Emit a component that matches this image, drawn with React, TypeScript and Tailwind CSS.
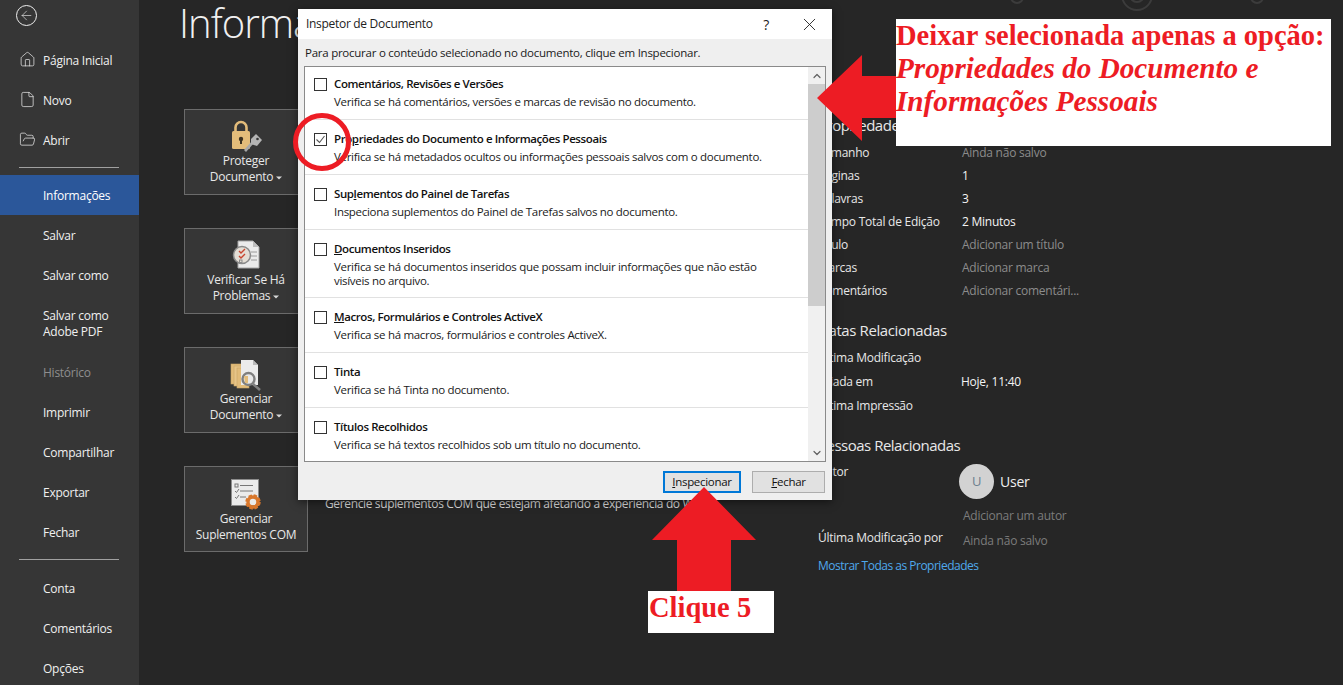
import { ArrowLeft, ChevronDown, ChevronUp, File, FolderOpen, Home, X } from "lucide-react"

const topItems = [
  { label: "Página Inicial", icon: <Home size={17} strokeWidth={1} /> },
  { label: "Novo", icon: <File size={17} strokeWidth={1} /> },
  { label: "Abrir", icon: <FolderOpen size={17} strokeWidth={1} /> },
]

const middleItems = ["Salvar", "Salvar como"]
const lowerItems = ["Imprimir", "Compartilhar", "Exportar", "Fechar"]
const bottomItems = ["Conta", "Comentários", "Opções"]

const properties = [
  { label: "Tamanho", value: "Ainda não salvo", muted: true },
  { label: "Páginas", value: "1", muted: false },
  { label: "Palavras", value: "3", muted: false },
  { label: "Tempo Total de Edição", value: "2 Minutos", muted: false },
  { label: "Título", value: "Adicionar um título", muted: true },
  { label: "Marcas", value: "Adicionar marca", muted: true },
  { label: "Comentários", value: "Adicionar comentári...", muted: true },
]

const dates = [
  { label: "Última Modificação", value: "" },
  { label: "Criada em", value: "Hoje, 11:40" },
  { label: "Última Impressão", value: "" },
]

const inspectors = [
  {
    title: <>Comentários, Revisões e Versões</>,
    text: "Verifica se há comentários, versões e marcas de revisão no documento.",
    height: "h-[55px]",
  },
  {
    title: <>Pro<u>p</u>riedades do Documento e Informações Pessoais</>,
    text: "Verifica se há metadados ocultos ou informações pessoais salvos com o documento.",
    height: "h-[55px]",
    checked: true,
  },
  {
    title: <>Sup<u>l</u>ementos do Painel de Tarefas</>,
    text: "Inspeciona suplementos do Painel de Tarefas salvos no documento.",
    height: "h-[55px]",
  },
  {
    title: <><u>D</u>ocumentos Inseridos</>,
    text: "Verifica se há documentos inseridos que possam incluir informações que não estão\nvisíveis no arquivo.",
    height: "h-[68px]",
  },
  {
    title: <><u>M</u>acros, Formulários e Controles ActiveX</>,
    text: "Verifica se há macros, formulários e controles ActiveX.",
    height: "h-[55px]",
  },
  {
    title: <>Tinta</>,
    text: "Verifica se há Tinta no documento.",
    height: "h-[55px]",
  },
  {
    title: <>Títulos Recolhidos</>,
    text: "Verifica se há textos recolhidos sob um título no documento.",
    height: "h-[55px]",
  },
]

function MenuItem({ label, active, muted }: { label: string; active?: boolean; muted?: boolean }) {
  return (
    <div
      className={`flex h-10 items-center pl-[43px] pt-[2px] text-[12px] tracking-[-0.25px] ${active ? "bg-[#2b579a] text-white" : ""} ${
        muted ? "text-[#8e8e8e]" : "text-[#f0f0f0]"
      }`}
    >
      {label}
    </div>
  )
}

function Sidebar() {
  return (
    <aside className="flex h-full w-[139px] shrink-0 flex-col overflow-hidden bg-[#363636]">
      <div className="flex h-10 shrink-0 items-start pl-4 pt-[5px] text-[#f0f0f0]">
        <div className="flex h-[21px] w-[21px] items-center justify-center rounded-full border border-[#f0f0f0]">
          <ArrowLeft size={15} strokeWidth={1} />
        </div>
      </div>
      {topItems.map((item) => (
        <div
          key={item.label}
          className="relative flex h-10 shrink-0 items-center pl-[43px] pt-[2px] text-[12px] tracking-[-0.25px] text-[#f0f0f0]"
        >
          <span className="absolute left-[19px] top-[11px]">{item.icon}</span>
          {item.label}
        </div>
      ))}
      <div className="ml-[19px] mt-[7px] h-px w-[100px] shrink-0 bg-[#a0a0a0]" />
      <div className="mt-[7px] shrink-0">
        <MenuItem label="Informações" active />
        {middleItems.map((label) => (
          <MenuItem key={label} label={label} />
        ))}
        <div className="flex h-[57px] items-center pl-[43px] pt-[1px] text-[12px] leading-4 tracking-[-0.25px] text-[#f0f0f0]">
          Salvar como
          <br />
          Adobe PDF
        </div>
        <MenuItem label="Histórico" muted />
        {lowerItems.map((label) => (
          <MenuItem key={label} label={label} />
        ))}
      </div>
      <div className="ml-[19px] mt-[7px] h-px w-[100px] shrink-0 bg-[#a0a0a0]" />
      <div className="mt-2 shrink-0">
        {bottomItems.map((label) => (
          <MenuItem key={label} label={label} />
        ))}
      </div>
    </aside>
  )
}

function Caret() {
  return (
    <svg className="ml-[3px] inline-block" width="6" height="4" viewBox="0 0 6 4">
      <polygon points="0,0.5 6,0.5 3,3.5" fill="#d8d8d8" />
    </svg>
  )
}

function LockIcon() {
  return (
    <svg width="34" height="34" viewBox="0 0 34 34">
      <path d="M6.5 13V8.5a5.5 5.5 0 0 1 11 0V13" fill="none" stroke="#e3bc7a" strokeWidth="2.6" />
      <rect x="3" y="12" width="18" height="18" rx="1.5" fill="#e3bc7a" />
      <circle cx="12" cy="20" r="2.2" fill="#3a3020" />
      <rect x="11" y="20" width="2" height="5" fill="#3a3020" />
      <path d="M15 31l8-9 2 2-8 9z" fill="#a8a8a8" />
      <path d="M22 20l5-5 6 6-5 6-6-2z" fill="#b4b4b4" />
      <circle cx="28.5" cy="20" r="1.3" fill="#363636" />
    </svg>
  )
}

function CheckIcon() {
  return (
    <svg width="34" height="34" viewBox="0 0 34 34">
      <path d="M9 3h15l6 6v21H9z" fill="#ebebeb" stroke="#a6a6a6" />
      <path d="M24 3v6h6z" fill="#bdbdbd" />
      <path d="M22 14h6M22 18h6M22 22h6" stroke="#9a9a9a" />
      <circle cx="13" cy="17" r="8.5" fill="#e4ded5" stroke="#8a8a8a" strokeWidth="1.5" />
      <path d="M10 13l2 2 4-4M10 18l2 2 4-4" fill="none" stroke="#c8452f" strokeWidth="1.4" />
      <rect x="10.5" y="22" width="2.5" height="2.5" fill="none" stroke="#8a8a8a" />
    </svg>
  )
}

function ManageIcon() {
  return (
    <svg width="34" height="34" viewBox="0 0 34 34">
      <rect x="2" y="7" width="14" height="20" fill="#e3bc7a" stroke="#c9a566" strokeWidth="0.6" />
      <rect x="5" y="9" width="14" height="20" fill="#e8c588" stroke="#c9a566" strokeWidth="0.6" />
      <rect x="8" y="11" width="12" height="20" fill="#e3bc7a" stroke="#c9a566" strokeWidth="0.6" />
      <path d="M12 3h12l5 5v20H12z" fill="#ebebeb" />
      <path d="M24 3v5h5z" fill="#b9b9b9" />
      <circle cx="19.5" cy="22" r="6" fill="#e8e8e8" stroke="#7f7f7f" strokeWidth="2.4" />
      <path d="M15 19h4v7h-3z" fill="#e3bc7a" />
      <path d="M24 27l7 6" stroke="#7f7f7f" strokeWidth="2.6" />
    </svg>
  )
}

function AddinIcon() {
  return (
    <svg width="34" height="34" viewBox="0 0 34 34">
      <rect x="2.5" y="3.5" width="27" height="26" fill="#ebebeb" stroke="#8c8c8c" />
      <rect x="6" y="8" width="3" height="3" fill="none" stroke="#777" />
      <path d="M11 9.5h13M11 15h13M11 21h6" stroke="#777" />
      <path d="M6 15l1.5 1.5L10 13M6 21l1.5 1.5L10 19" fill="none" stroke="#777" />
      <circle cx="24" cy="26" r="6.2" fill="none" stroke="#d9772b" strokeWidth="3" strokeDasharray="3.2 1.65" />
      <circle cx="24" cy="26" r="5" fill="none" stroke="#d9772b" strokeWidth="3.4" />
    </svg>
  )
}

function ActionRow({
  icon,
  lines,
  caret,
  text,
}: {
  icon: React.ReactNode
  lines: string[]
  caret?: boolean
  text?: string
}) {
  return (
    <div className="flex h-[86px] items-center gap-[17px]">
      <div className="flex h-[86px] w-[124px] shrink-0 flex-col items-center border border-[#6b6b6b] bg-[#363636] pt-[9px] text-center text-[12px] leading-4 tracking-[-0.25px] text-[#e8e8e8]">
        <div className={text ? "h-[35px]" : "h-[34px]"}>{icon}</div>
        <div>{lines[0]}</div>
        <div>
          {lines[1]}
          {caret && <Caret />}
        </div>
      </div>
      {text && <p className="mt-[-10px] whitespace-nowrap text-[12px] tracking-[-0.36px] text-[#d6d6d6]">{text}</p>}
    </div>
  )
}

function PropertyRow({ label, value, muted }: { label: string; value: string; muted?: boolean }) {
  return (
    <div className="flex h-[23px] items-center text-[12px] tracking-[-0.25px] text-[#e8e8e8]">
      <div className="w-[144px] shrink-0 whitespace-nowrap">{label}</div>
      <div className={muted ? "text-[#8c8c8c]" : "text-[#f4f4f4]"}>{value}</div>
    </div>
  )
}

function Details() {
  return (
    <section className="w-[300px] shrink-0 pt-[114px]">
      <h2 className="text-[15px] leading-[22px] tracking-[-0.5px] text-[#e8e8e8]">Propriedades</h2>
      <div className="mt-[5px]">
        {properties.map((row) => (
          <PropertyRow key={row.label} {...row} />
        ))}
      </div>
      <h2 className="mt-[17px] text-[15px] leading-[22px] tracking-[-0.4px] text-[#e8e8e8]">Datas Relacionadas</h2>
      <div className="mt-[5px]">
        {dates.map((row) => (
          <div key={row.label} className="flex h-6 items-center text-[12px] tracking-[-0.25px] text-[#e8e8e8]">
            <div className="w-[143px] shrink-0 whitespace-nowrap">{row.label}</div>
            <div className="text-[#f4f4f4]">{row.value}</div>
          </div>
        ))}
      </div>
      <h2 className="mt-[16px] text-[15px] leading-[22px] tracking-[-0.5px] text-[#e8e8e8]">Pessoas Relacionadas</h2>
      <div className="mt-[4px] flex text-[12px] tracking-[-0.25px] text-[#e8e8e8]">
        <div className="w-[141px] shrink-0 leading-6">Autor</div>
        <div>
          <div className="mt-[4px] flex items-center gap-[6px]">
            <div className="flex h-[35px] w-[35px] items-center justify-center rounded-full bg-[#d2d2d2] text-[13px] text-[#6d7f8e]">
              U
            </div>
            <span className="text-[14px] text-[#f0f0f0]">User</span>
          </div>
          <div className="ml-[4px] mt-[7px] leading-5 text-[#7c7c7c]">Adicionar um autor</div>
        </div>
      </div>
      <div className="mt-[2px] flex text-[12px] leading-5 tracking-[-0.25px]">
        <div className="w-[145px] shrink-0 whitespace-nowrap text-[#e8e8e8]">Última Modificação por</div>
        <div className="mt-[3px] text-[#7c7c7c]">Ainda não salvo</div>
      </div>
      <div className="mt-[5px] text-[12px] leading-5 tracking-[-0.5px] text-[#4fa9ec]">Mostrar Todas as Propriedades</div>
    </section>
  )
}

function InspectorDialog() {
  return (
    <div className="absolute left-[298px] top-[9px] flex h-[491px] w-[534px] flex-col bg-[#efefef] text-[11.5px] tracking-[-0.3px] text-[#1a1a1a] shadow-[0_2px_8px_rgba(0,0,0,0.5)]">
      <div className="flex h-[30px] shrink-0 items-center bg-white pl-2 pr-3">
        <span className="flex-1 text-[12px] text-[#222]">Inspetor de Documento</span>
        <span className="mr-[30px] text-[14px]">?</span>
        <X size={21} strokeWidth={1} />
      </div>
      <p className="ml-[7px] mt-[6px] h-[21px] leading-4 tracking-[-0.25px]">Para procurar o conteúdo selecionado no documento, clique em Inspecionar.</p>
      <div className="mx-[6px] flex h-[396px] overflow-hidden border border-[#8a8a8a] bg-white">
        <div className="min-w-0 flex-1 overflow-hidden">
          <div className="-mt-[2px]">
            {inspectors.map((item, index) => (
              <div key={index} className={`flex gap-[7px] border-b border-[#e1e1e1] pl-[9px] pt-[11px] ${item.height}`}>
                <div className="mt-[2px] flex h-[13px] w-[13px] shrink-0 items-center justify-center border border-[#333] bg-white">
                  {item.checked && (
                    <svg width="11" height="11" viewBox="0 0 11 11">
                      <path d="M1.5 5.5l3 3 5-6.5" fill="none" stroke="#555" strokeWidth="1.1" />
                    </svg>
                  )}
                </div>
                <div>
                  <div className="whitespace-nowrap font-semibold leading-4 tracking-[-0.4px] text-[#111]">{item.title}</div>
                  <div className="mt-[3px] whitespace-pre-line leading-[13.5px]">{item.text}</div>
                </div>
              </div>
            ))}
          </div>
        </div>
        <div className="flex w-[17px] shrink-0 flex-col items-center bg-[#f0f0f0] text-[#606060]">
          <div className="flex h-[17px] items-center">
            <ChevronUp size={12} strokeWidth={2.4} />
          </div>
          <div className="h-[222px] w-full bg-[#cdcdcd]" />
          <div className="mt-auto flex h-[17px] items-center">
            <ChevronDown size={12} strokeWidth={2.4} />
          </div>
        </div>
      </div>
      <div className="mr-[7px] mt-[9px] flex justify-end gap-[11px] text-[11.5px]">
        <button className="h-[22px] w-[78px] border-2 border-[#0078d7] bg-[#e1e1e1] text-[#111]">
          <u>I</u>nspecionar
        </button>
        <button className="h-[22px] w-[73px] border border-[#adadad] bg-[#e1e1e1] text-[#111]">
          <u>F</u>echar
        </button>
      </div>
    </div>
  )
}

function Annotations() {
  return (
    <>
      <svg className="absolute left-[1000px] top-0" width="280" height="12" viewBox="0 0 280 12">
        <circle cx="17" cy="-3" r="6" fill="none" stroke="#3c3c3c" strokeWidth="2" />
        <circle cx="137" cy="-5" r="15" fill="none" stroke="#3c3c3c" strokeWidth="2" />
        <circle cx="137" cy="-5" r="7" fill="none" stroke="#3c3c3c" strokeWidth="2" />
        <circle cx="257" cy="-3" r="6" fill="none" stroke="#3c3c3c" strokeWidth="2" />
      </svg>
      <div className="absolute left-[293px] top-[113px] h-[58px] w-[58px] rounded-full border-[5px] border-[#ed1c24]" />
      <svg className="absolute left-[817px] top-[55px]" width="80" height="87" viewBox="0 0 80 87">
        <polygon points="0,43 45,0 45,21 79,21 79,63 45,63 45,86" fill="#ed1c24" />
      </svg>
      <svg className="absolute left-[652px] top-[487px]" width="104" height="105" viewBox="0 0 104 105">
        <polygon points="52,0 104,53 79,53 79,104 25,104 25,53 0,53" fill="#ed1c24" />
      </svg>
      <div className="absolute left-[896px] top-[19px] h-[127px] w-[435px] bg-white font-['Liberation_Serif',serif] text-[28.5px] font-bold leading-[33px] text-[#ed1c24]">
        <div className="whitespace-nowrap">Deixar selecionada apenas a opção:</div>
        <div className="text-[29.2px] italic">
          Propriedades do Documento e
          <br />
          Informações Pessoais
        </div>
      </div>
      <div className="absolute left-[648px] top-[591px] h-[42px] w-[126px] bg-white pl-px font-['Liberation_Serif',serif] text-[28.5px] font-bold leading-[34px] text-[#ed1c24]">
        Clique 5
      </div>
    </>
  )
}

export default function App() {
  return (
    <div className="relative flex h-[685px] w-[1343px] overflow-hidden bg-[#262626] font-['Open_Sans',sans-serif]">
      <Sidebar />
      <main className="flex min-w-0 flex-1">
        <div className="w-[679px] shrink-0 pl-[40px]">
          <h1 className="h-[109px] text-[40px] font-light leading-[46px] tracking-[-1px] text-[#f0f0f0]">Informações</h1>
          <div className="ml-[5px] flex flex-col gap-[33px]">
            <ActionRow icon={<LockIcon />} lines={["Proteger", "Documento"]} caret />
            <ActionRow icon={<CheckIcon />} lines={["Verificar Se Há", "Problemas"]} caret />
            <ActionRow icon={<ManageIcon />} lines={["Gerenciar", "Documento"]} caret />
            <ActionRow
              icon={<AddinIcon />}
              lines={["Gerenciar", "Suplementos COM"]}
              text="Gerencie suplementos COM que estejam afetando a experiência do Word"
            />
          </div>
        </div>
        <Details />
      </main>
      <InspectorDialog />
      <Annotations />
    </div>
  )
}
